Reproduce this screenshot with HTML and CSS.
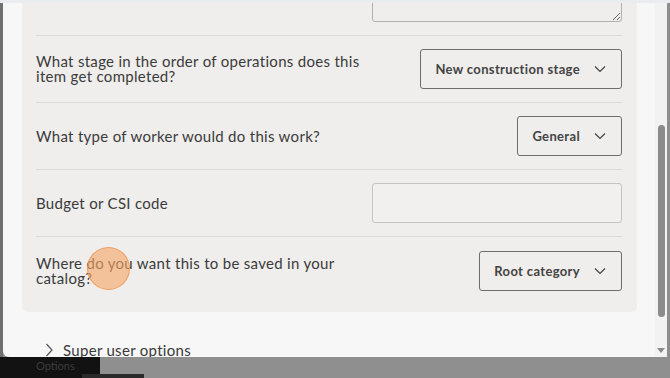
FILE: index.html
```html
<!DOCTYPE html>
<html lang="en">

<head>
    <meta charset="UTF-8">
    <meta name="viewport" content="width=device-width, initial-scale=1.0">
    <title>Item details</title>
    <link rel="stylesheet" href="styles.css">
</head>

<body>
    <div class="screen">
        <div class="topbar"></div>
        <div class="stage">
            <div class="edge"></div>
            <div class="modal">
                <div class="modal-body">
                    <div class="card">
                        <div class="row row-notes">
                            <textarea class="notes"></textarea>
                        </div>
                        <div class="row">
                            <p class="label">What stage in the order of operations does this item get completed?</p>
                            <div class="select">New construction stage
                                <svg width="12" height="8" viewBox="0 0 12 8"><path d="M1 1.5 L6 6.5 L11 1.5" fill="none" stroke="#444" stroke-width="1.2"/></svg>
                            </div>
                        </div>
                        <div class="row">
                            <p class="label">What type of worker would do this work?</p>
                            <div class="select">General
                                <svg width="12" height="8" viewBox="0 0 12 8"><path d="M1 1.5 L6 6.5 L11 1.5" fill="none" stroke="#444" stroke-width="1.2"/></svg>
                            </div>
                        </div>
                        <div class="row">
                            <p class="label">Budget or CSI code</p>
                            <div class="input"></div>
                        </div>
                        <div class="row row-last">
                            <p class="label">Where do you want this to be saved in your catalog?</p>
                            <div class="select">Root category
                                <svg width="12" height="8" viewBox="0 0 12 8"><path d="M1 1.5 L6 6.5 L11 1.5" fill="none" stroke="#444" stroke-width="1.2"/></svg>
                            </div>
                            <span class="cursor"></span>
                        </div>
                    </div>
                    <div class="super">
                        <svg width="8" height="14" viewBox="0 0 8 14"><path d="M1.5 1 L7 7 L1.5 13" fill="none" stroke="#555" stroke-width="1.2"/></svg>
                        Super user options
                    </div>
                </div>
                <div class="scrollbar">
                    <div class="thumb"></div>
                    <div class="arrow"></div>
                </div>
            </div>
            <div class="edge edge-right"></div>
        </div>
        <div class="backdrop">
            <div class="dark">Options</div>
            <div class="gray"><span class="tab"></span></div>
        </div>
    </div>
</body>

</html>
```

FILE: styles.css
```css
* {
    margin: 0;
    padding: 0;
    box-sizing: border-box;
}

body {
    font-family: Lato, "Noto Sans", sans-serif;
    color: #3a3a3a;
    background-color: #8e8e8e;
}

.screen {
    width: 670px;
    height: 378px;
    display: flex;
    flex-direction: column;
    overflow: hidden;
}

.topbar {
    height: 3px;
    background-color: #e9edf0;
}

.stage {
    height: 354px;
    display: flex;
}

.edge {
    width: 3px;
    background-color: #707070;
}

.edge-right {
    background-color: #8e8e8e;
}

.modal {
    flex: 1;
    display: flex;
    background-color: #f7f7f7;
    border-bottom-left-radius: 6px;
    overflow: hidden;
}

.modal-body {
    flex: 1;
    padding: 0 18px 0 19px;
    overflow: hidden;
}

.card {
    background-color: #efeeec;
    padding: 0 15px 0 14px;
    border-radius: 0 0 6px 6px;
    overflow: hidden;
}

.row {
    position: relative;
    display: flex;
    align-items: center;
    justify-content: space-between;
    padding: 13px 0;
    border-bottom: 1px solid #dcdad6;
}

.row-notes {
    justify-content: flex-end;
    padding: 0 0 13px;
}

.row-last {
    border-bottom: none;
    padding-top: 14px;
    padding-bottom: 21px;
}

.notes {
    display: block;
    width: 250px;
    height: 60px;
    margin-top: -41px;
    background-color: #efeeec;
    border: 1px solid #b3b1ae;
    border-radius: 3px;
}

.label {
    font-size: 15px;
    line-height: 15px;
    letter-spacing: 0.3px;
    max-width: 345px;
    color: #3b3b3b;
}

.select {
    height: 40px;
    display: flex;
    align-items: center;
    gap: 14px;
    padding: 0 15px 0 14px;
    border: 1px solid #6d6d6d;
    border-radius: 3px;
    font-size: 13px;
    font-weight: 700;
    letter-spacing: 0.35px;
    color: #444;
}

.input {
    width: 250px;
    height: 40px;
    background-color: #f1f0ee;
    border: 1px solid #c6c4c1;
    border-radius: 3px;
}

.cursor {
    position: absolute;
    left: 51px;
    top: 10px;
    width: 43px;
    height: 43px;
    border-radius: 50%;
    background-color: rgba(246, 166, 104, 0.62);
    border: 1px solid rgba(240, 150, 80, 0.8);
}

.super {
    display: flex;
    align-items: center;
    gap: 10px;
    padding: 28px 0 0 23px;
    font-size: 15px;
    line-height: 20px;
    letter-spacing: 0.3px;
    color: #3a3a3a;
}

.scrollbar {
    width: 12px;
    background-color: #f2f2f2;
    display: flex;
    flex-direction: column;
    align-items: center;
    padding-top: 122px;
}

.thumb {
    width: 7px;
    height: 192px;
    border-radius: 4px;
    background-color: #8b8b8b;
}

.arrow {
    margin-top: 31px;
    width: 0;
    height: 0;
    border-left: 4px solid transparent;
    border-right: 4px solid transparent;
    border-top: 5px solid #8a8a8a;
}

.backdrop {
    flex: 1;
    display: flex;
}

.dark {
    width: 100px;
    background-color: #121212;
    color: #3c3c3c;
    font-size: 11px;
    padding: 4px 0 0 36px;
    line-height: 10px;
}

.gray {
    flex: 1;
    background-color: #8f8f8f;
    position: relative;
}

.tab {
    position: absolute;
    left: -18px;
    bottom: 0;
    width: 62px;
    height: 4px;
    background-color: #2a2a2a;
}
```
